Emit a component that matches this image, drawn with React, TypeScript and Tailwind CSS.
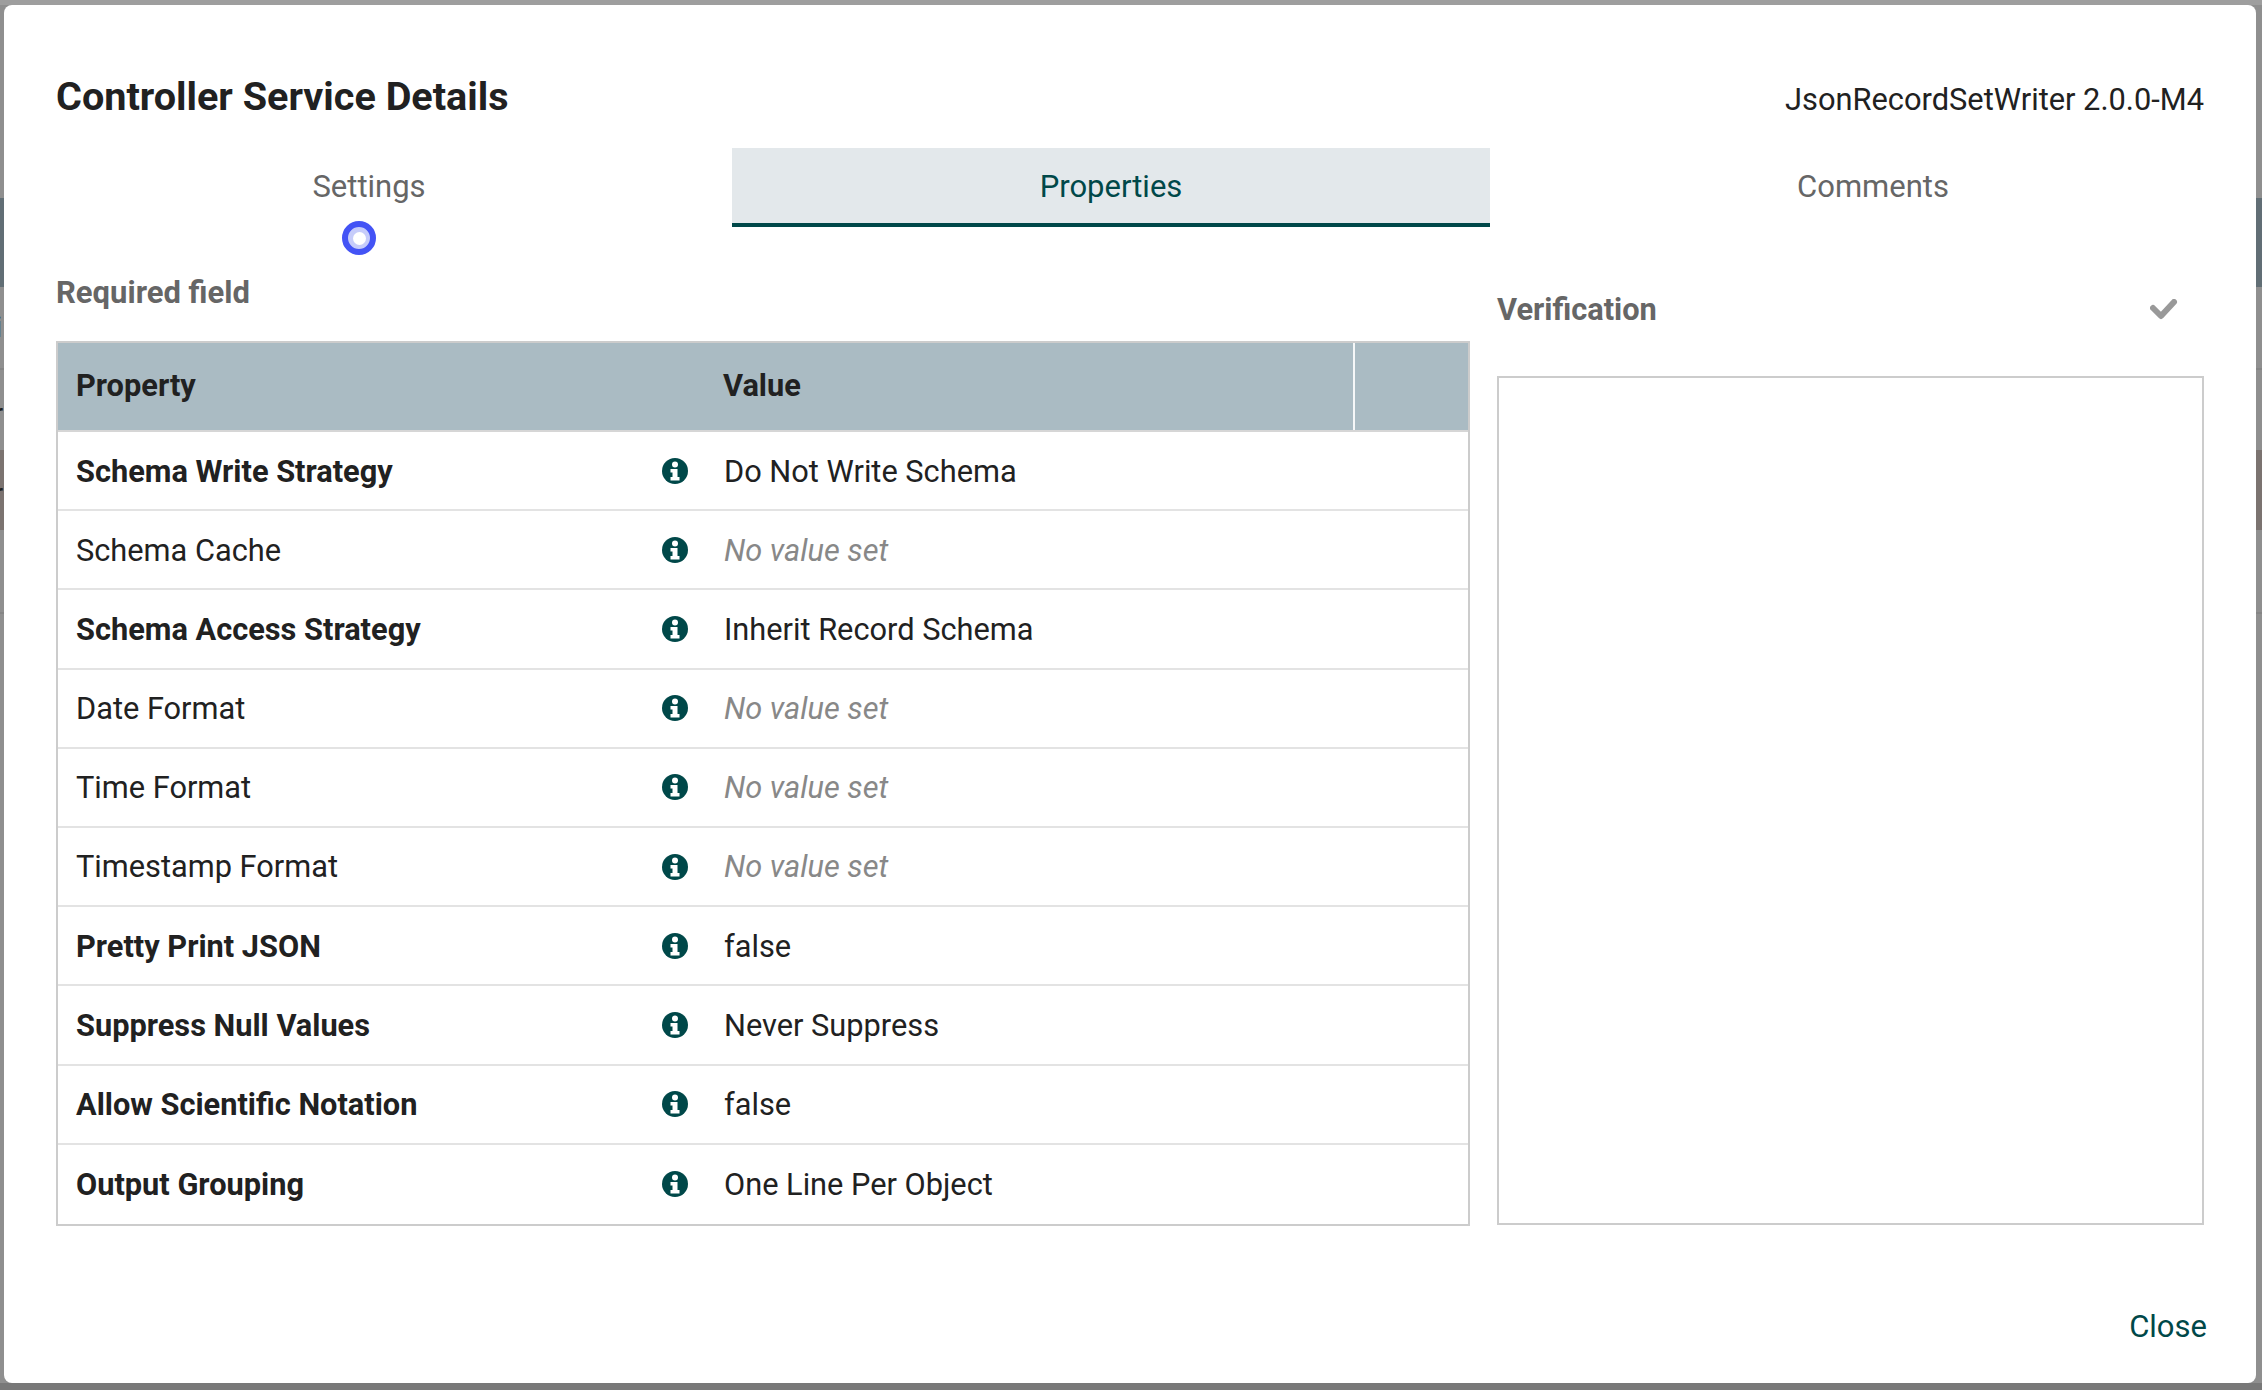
const rows = [
  { name: "Schema Write Strategy", value: "Do Not Write Schema", required: true },
  { name: "Schema Cache", value: null, required: false },
  { name: "Schema Access Strategy", value: "Inherit Record Schema", required: true },
  { name: "Date Format", value: null, required: false },
  { name: "Time Format", value: null, required: false },
  { name: "Timestamp Format", value: null, required: false },
  { name: "Pretty Print JSON", value: "false", required: true },
  { name: "Suppress Null Values", value: "Never Suppress", required: true },
  { name: "Allow Scientific Notation", value: "false", required: true },
  { name: "Output Grouping", value: "One Line Per Object", required: true },
];

function InfoIcon() {
  return (
    <svg viewBox="0 0 26 26" className="h-[26px] w-[26px]">
      <circle cx="13" cy="13" r="13" fill="#004849" />
      <circle cx="13" cy="6.5" r="3" fill="#fff" />
      <path d="M8.5 11h7v8h2v3.5h-9V19h2v-4.5h-2z" fill="#fff" />
    </svg>
  );
}

export default function App() {
  return (
    <div className="relative h-[1390px] w-[2262px] overflow-hidden bg-[#8f8f8f] pt-[5px] pr-1.5 pb-[7px] pl-1 font-['Roboto',sans-serif]">
      {/* Page behind the dialog, only its edges show */}
      <div className="absolute inset-0 flex flex-col">
        <div className="h-[5px] bg-[#9e9e9e]" />
        <div className="h-[193px]" />
        <div className="h-[89px] bg-[#616e75]" />
        <div className="h-[81px]" />
        <div className="h-[2px] bg-[#858585]" />
        <div className="h-[80px]" />
        <div className="h-[80px] bg-[#7b7370]" />
        <div className="h-[82px]" />
        <div className="h-[2px] bg-[#858585]" />
        <div className="flex-1" />
        <div className="h-[7px] bg-[#787878]" />
      </div>
      <span className="absolute top-[305px] left-[-5px] text-[30px] leading-[44px] text-[#212121]">i</span>
      <span className="absolute top-[392px] left-[-7px] text-[30px] leading-[44px] text-[#212121]">r</span>
      <span className="absolute top-[472px] left-[-7px] text-[30px] leading-[44px] text-[#212121]">r</span>

      <div className="relative flex h-full flex-col rounded-lg bg-white px-[52px]">
        <div className="flex h-[143px] shrink-0 items-end justify-between pb-[26px]">
          <h1 className="text-[39.6px] leading-[50px] font-bold text-[#212121]">Controller Service Details</h1>
          <span className="text-[30.8px] leading-[44px] text-[#212121]">JsonRecordSetWriter 2.0.0-M4</span>
        </div>

        <div className="flex h-[79px] shrink-0 text-[31px] text-[#666666]">
          <div className="relative flex w-[676px] items-center justify-center pr-[50px]">
            Settings
            {/* Focus ring on the tab */}
            <div className="absolute top-[73px] left-[286px] flex h-[34px] w-[34px] items-center justify-center rounded-full border-[6px] border-[#4353f5] bg-[#c6ccfa]">
              <div className="h-[13px] w-[13px] rounded-full bg-white" />
            </div>
          </div>
          <div className="flex w-[758px] items-center justify-center border-b-4 border-[#004849] bg-[#e3e8eb] pt-[4px] text-[#004849]">
            Properties
          </div>
          <div className="flex flex-1 items-center justify-center pl-[52px]">Comments</div>
        </div>

        <div className="flex min-h-0 flex-1 gap-[27px]">
          <div className="flex w-[1414px] shrink-0 flex-col">
            <div className="h-[114px] shrink-0 pt-[46px] text-[31px] leading-[40px] font-bold text-[#666666]">
              Required field
            </div>
            <div className="flex-1 border-2 border-[#cccccc]">
              <div className="flex h-[89px] items-center border-b-2 border-[#d6d6d6] bg-[#aabbc3] text-[30.75px] font-bold text-[#212121]">
                <div className="w-[665px] pl-[18px]">Property</div>
                <div className="flex-1">Value</div>
                <div className="h-full w-[115px] border-l-2 border-[#f5f7f8]" />
              </div>
              {rows.map((row) => (
                <div
                  key={row.name}
                  className="flex h-[79.2px] items-center border-b-2 border-[#e3e3e3] pt-[2px] text-[30.75px] text-[#212121] last:border-b-0"
                >
                  <div className={`w-[604px] pl-[18px] ${row.required ? "font-bold" : ""}`}>{row.name}</div>
                  <div className="mt-[-2px] flex w-[60px] items-center">
                    <InfoIcon />
                  </div>
                  {row.value ? (
                    <div className="pl-[2px]">{row.value}</div>
                  ) : (
                    <div className="pl-[2px] text-[#888888] italic">No value set</div>
                  )}
                </div>
              ))}
            </div>
          </div>

          <div className="flex min-w-0 flex-1 flex-col">
            <div className="flex h-[149px] shrink-0 items-center justify-between pt-[17px] pr-[26px] text-[30.75px] font-bold text-[#666666]">
              <span>Verification</span>
              <svg viewBox="0 0 28 22" className="h-[22px] w-[28px]">
                <path
                  d="M3 9l8 8L24 3"
                  fill="none"
                  stroke="#999999"
                  strokeWidth="6"
                  strokeLinecap="round"
                  strokeLinejoin="round"
                />
              </svg>
            </div>
            <div className="flex-1 border-2 border-[#cccccc]" />
          </div>
        </div>

        <div className="flex h-[158px] shrink-0 items-end justify-end pb-[34px]">
          <button className="mr-[-3px] text-[31px] leading-[44px] text-[#004849]">Close</button>
        </div>
      </div>
    </div>
  );
}
